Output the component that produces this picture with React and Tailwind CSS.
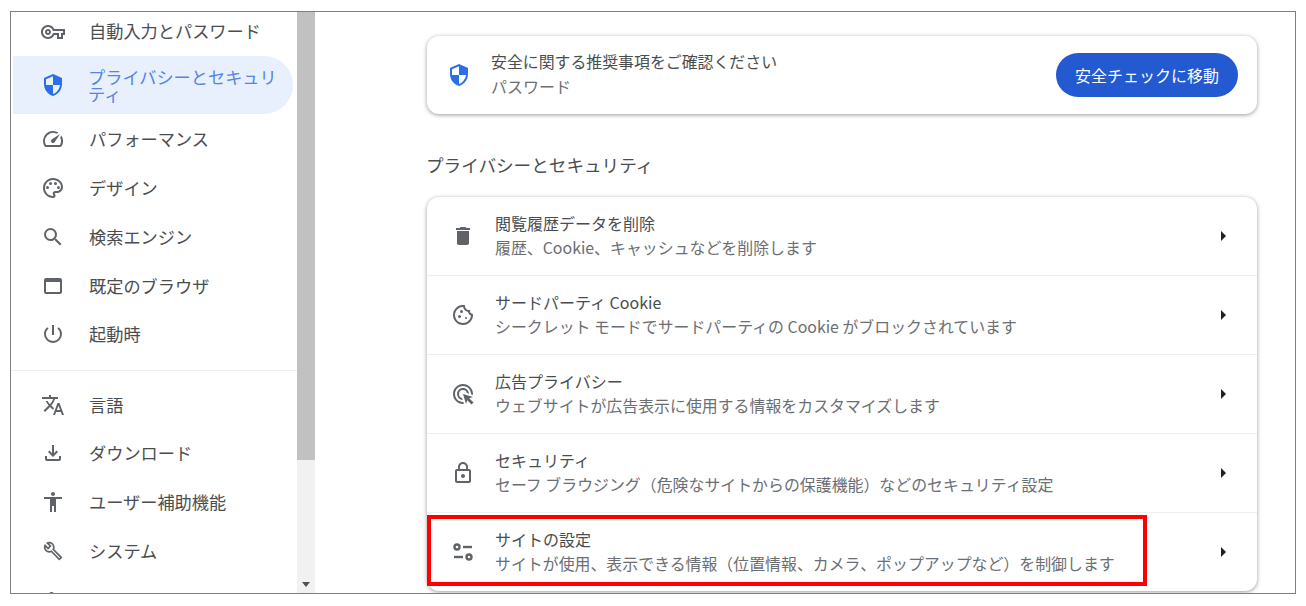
import {
  MdOutlineVpnKey,
  MdSecurity,
  MdOutlineSpeed,
  MdOutlinePalette,
  MdSearch,
  MdOutlineWebAsset,
  MdPowerSettingsNew,
  MdTranslate,
  MdOutlineFileDownload,
  MdAccessibility,
  MdOutlineBuild,
  MdDelete,
  MdOutlineCookie,
  MdOutlineAdsClick,
  MdLockOutline,
  MdExtension,
} from "react-icons/md";

const FONT = "font-['Noto_Sans_CJK_JP','Noto_Sans',sans-serif]";

const topNav = [
  { icon: MdOutlineSpeed, label: "パフォーマンス" },
  { icon: MdOutlinePalette, label: "デザイン" },
  { icon: MdSearch, label: "検索エンジン" },
  { icon: MdOutlineWebAsset, label: "既定のブラウザ" },
  { icon: MdPowerSettingsNew, label: "起動時" },
];

const bottomNav = [
  { icon: MdTranslate, label: "言語" },
  { icon: MdOutlineFileDownload, label: "ダウンロード" },
  { icon: MdAccessibility, label: "ユーザー補助機能" },
  { icon: MdOutlineBuild, label: "システム", iconClass: "mx-0.5 h-5 w-5" },
];

function TuneIcon({ className }) {
  return (
    <svg viewBox="0 0 24 24" fill="none" stroke="currentColor" strokeWidth="2.4" className={className}>
      <circle cx="6" cy="7" r="2.5" />
      <path d="M12 7h9" />
      <circle cx="18" cy="17" r="2.5" />
      <path d="M3 17h9" />
    </svg>
  );
}

const rows = [
  { icon: MdDelete, title: "閲覧履歴データを削除", sub: "履歴、Cookie、キャッシュなどを削除します" },
  { icon: MdOutlineCookie, title: "サードパーティ Cookie", sub: "シークレット モードでサードパーティの Cookie がブロックされています" },
  { icon: MdOutlineAdsClick, title: "広告プライバシー", sub: "ウェブサイトが広告表示に使用する情報をカスタマイズします" },
  { icon: MdLockOutline, title: "セキュリティ", sub: "セーフ ブラウジング（危険なサイトからの保護機能）などのセキュリティ設定" },
  { icon: TuneIcon, title: "サイトの設定", sub: "サイトが使用、表示できる情報（位置情報、カメラ、ポップアップなど）を制御します" },
];

function NavRow({ icon: Icon, label, iconClass = "h-6 w-6" }) {
  return (
    <div className="flex h-[48.75px] shrink-0 items-center pl-[30px]">
      <Icon className={`shrink-0 text-[#5f6368] ${iconClass}`} />
      <span className="ml-6 text-[17.2px] text-[#4a4d50]">{label}</span>
    </div>
  );
}

function Sidebar() {
  return (
    <nav className="flex w-[286px] shrink-0 flex-col overflow-hidden">
      <div className="flex h-10 shrink-0 items-center pl-[30px]">
        <MdOutlineVpnKey className="h-6 w-6 shrink-0 text-[#5f6368]" />
        <span className="ml-6 -translate-y-px text-[17.2px] text-[#4a4d50]">自動入力とパスワード</span>
      </div>
      <div className="mt-1 mb-px ml-0.5 -mr-[-4px] flex h-[58px] shrink-0 items-center rounded-r-[29px] bg-[#e8f0fe] pl-7">
        <MdSecurity className="h-6 w-6 shrink-0 text-[#2a6fe8]" />
        <span className="ml-6 w-[195px] -translate-x-px text-[17.2px] leading-[17px] text-[#5585e0]">プライバシーとセキュリティ</span>
      </div>
      {topNav.map((item) => (
        <NavRow key={item.label} {...item} />
      ))}
      <div className="mt-[11px] mb-[9.5px] h-px shrink-0 bg-[#eeeeee]" />
      {bottomNav.map((item) => (
        <NavRow key={item.label} {...item} />
      ))}
      <div className="flex h-[48.75px] shrink-0 items-center pl-[30px]">
        <MdExtension className="mt-1.5 h-6 w-6 text-[#5f6368]" />
      </div>
    </nav>
  );
}

function Scrollbar() {
  return (
    <div className="flex w-[18px] shrink-0 flex-col bg-[#f1f1f1]">
      <div className="h-[448px] bg-[#c1c1c1]" />
      <div className="mt-auto mb-1.5 flex justify-center">
        <div className="h-0 w-0 border-x-4 border-t-[5px] border-x-transparent border-t-[#505050]" />
      </div>
    </div>
  );
}

function SettingRow({ icon: Icon, title, sub, first }) {
  return (
    <div className={`flex items-center ${first ? "h-[78px]" : "h-[79px] border-t border-[#eeeeee]"}`}>
      <div className="flex w-[68px] shrink-0 justify-center pl-[3px]">
        <Icon className="h-6 w-6 text-[#5f6368]" />
      </div>
      <div className="mb-0.5 flex-1">
        <div className="text-base leading-6 text-[#4a4d50]">{title}</div>
        <div className="mt-px text-[15.92px] leading-6 text-[#6b6e72]">{sub}</div>
      </div>
      <div className="mr-[31px] h-0 w-0 border-y-[5px] border-l-[5px] border-y-transparent border-l-[#202124]" />
    </div>
  );
}

export default function App() {
  return (
    <div className={`h-[606px] bg-white pt-[11px] pl-2.5 ${FONT}`}>
      <div className="flex h-[583px] w-[1286px] overflow-hidden border border-[#7f7f7f]">
        <Sidebar />
        <Scrollbar />
        <main className="relative flex-1 pt-6 pl-[112px] pr-[38px]">
          <section className="flex h-[78px] items-center rounded-xl bg-white pl-5 pr-[19px] shadow-[0_1px_4px_rgba(0,0,0,0.4)]">
            <MdSecurity className="h-6 w-6 shrink-0 text-[#2a6fe8]" />
            <div className="mb-0.5 ml-[20px] flex-1">
              <div className="text-[15.9px] leading-6 text-[#4a4d50]">安全に関する推奨事項をご確認ください</div>
              <div className="text-base leading-6 text-[#6b6e72]">パスワード</div>
            </div>
            <button className="h-[44px] w-[182px] rounded-full bg-[#2359d1] text-base text-white">
              安全チェックに移動
            </button>
          </section>
          <h2 className="mt-[39px] mb-5 -ml-px text-[17.6px] leading-6 font-normal text-[#4a4d50]">プライバシーとセキュリティ</h2>
          <section className="rounded-xl bg-white shadow-[0_1px_4px_rgba(0,0,0,0.4)]">
            {rows.map((row, i) => (
              <SettingRow key={row.title} {...row} first={i === 0} />
            ))}
          </section>
          <div className="absolute top-[503px] left-[112px] h-[71px] w-[720px] border-4 border-[#ff0000]" />
        </main>
      </div>
    </div>
  );
}
